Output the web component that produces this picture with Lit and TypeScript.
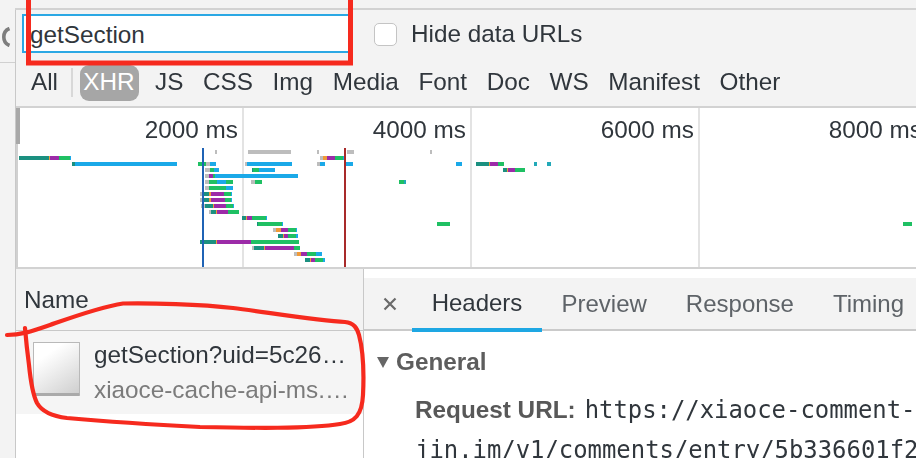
import { LitElement, html, css, svg } from "lit";
import { customElement } from "lit/decorators.js";

const C: Record<string, string> = {
  g: "#bdbdbd", t: "#1b9080", o: "#f09a38", p: "#9c2ba8", n: "#1fc063", b: "#1aa9e8", c: "#22a9b8",
};
type Seg = [string, number, number];
// Each row of the waterfall: centre y in the page and its coloured segments [colour, from x, to x].
const ROWS: [number, Seg[]][] = [
  [152, [["g", 215, 217], ["g", 248, 291], ["g", 317, 319], ["g", 347, 354], ["g", 430, 432]]],
  [158, [["t", 19, 49], ["o", 49, 50], ["p", 50, 59], ["n", 59, 70], ["b", 70, 71],
    ["g", 320, 323], ["o", 323, 327], ["p", 327, 335], ["n", 335, 343], ["b", 343, 345]]],
  [164, [["t", 72, 75], ["b", 75, 177], ["n", 198, 206], ["g", 206, 210], ["b", 210, 216], ["g", 245, 247], ["b", 247, 292],
    ["g", 317, 320], ["b", 320, 325], ["b", 346, 353], ["b", 456, 462], ["t", 476, 489], ["o", 489, 490], ["p", 490, 498], ["n", 498, 504],
    ["c", 534, 537], ["c", 547, 551]]],
  [170, [["g", 205, 210], ["n", 210, 214], ["b", 214, 219], ["t", 252, 253], ["n", 253, 259], ["b", 259, 275],
    ["t", 503, 507], ["o", 507, 508], ["p", 508, 515], ["n", 515, 525]]],
  [176, [["g", 205, 209], ["p", 209, 213], ["n", 213, 215], ["b", 215, 298]]],
  [182, [["g", 205, 209], ["n", 209, 217], ["b", 217, 226], ["n", 226, 233], ["g", 251, 255], ["n", 255, 262], ["n", 399, 404], ["c", 404, 406]]],
  [188, [["g", 205, 209], ["n", 209, 226], ["b", 226, 233]]],
  [194, [["g", 200, 203], ["t", 203, 209], ["o", 209, 211], ["p", 211, 224], ["n", 224, 231], ["b", 231, 232]]],
  [200, [["g", 200, 202], ["t", 202, 209], ["o", 209, 211], ["p", 211, 225], ["n", 225, 231], ["b", 231, 232]]],
  [206, [["g", 201, 205], ["t", 205, 213], ["o", 213, 214], ["p", 214, 226], ["n", 226, 233], ["b", 233, 234]]],
  [212, [["g", 209, 211], ["t", 211, 216], ["o", 216, 217], ["p", 217, 228], ["n", 228, 239]]],
  [218, [["t", 242, 246], ["o", 246, 247], ["p", 247, 252], ["n", 252, 266], ["b", 266, 267]]],
  [224, [["t", 257, 258], ["n", 258, 282], ["b", 282, 283], ["n", 437, 450], ["n", 903, 912]]],
  [230, [["g", 273, 276], ["o", 276, 281], ["p", 281, 288], ["n", 288, 296], ["b", 296, 297]]],
  [236, [["t", 278, 283], ["o", 283, 284], ["p", 284, 288], ["n", 288, 296], ["b", 296, 298]]],
  [242, [["t", 200, 216], ["o", 216, 217], ["p", 217, 251], ["n", 251, 299]]],
  [248, [["g", 252, 254], ["t", 254, 264], ["o", 264, 265], ["p", 265, 294], ["n", 294, 300]]],
  [254, [["g", 294, 297], ["o", 297, 301], ["p", 301, 307], ["n", 307, 316], ["b", 316, 322]]],
  [260, [["t", 305, 310], ["o", 310, 311], ["p", 311, 315], ["n", 315, 323], ["b", 323, 325]]],
];
const TYPES = ["JS", "CSS", "Img", "Media", "Font", "Doc", "WS", "Manifest", "Other"];
const TICKS = ["2000 ms", "4000 ms", "6000 ms", "8000 ms"];

@customElement("app-root")
export class AppRoot extends LitElement {
  static styles = css`
    :host {
      display: block; width: 916px; height: 458px; overflow: hidden; position: relative;
      font-family: "Liberation Sans", Arial, sans-serif; font-size: 24.3px; color: #30363c; background: #fff;
    }
    .shell { display: grid; grid-template-columns: 15px 1fr; height: 458px; filter: blur(0.35px); }
    .gutter { background: #f3f3f3; display: flex; flex-direction: column; }
    .gutter-top { height: 53px; padding: 9px 0 0 2px; box-sizing: content-box; border-bottom: 1px solid #d0d0d0; }
    .gutter-top svg { display: block; margin-top: 18px; }
    .main { display: flex; flex-direction: column; border-left: 1px solid #c8c8c8; min-width: 0; }
    .strip { height: 8px; flex: none; background: #f3f3f3; border-bottom: 2px solid #d2d2d2; margin-left: -1px; }
    .filter { height: 50px; flex: none; display: flex; align-items: center; background: #f3f3f3; }
    .input {
      width: 327px; height: 39px; margin: 0 0 0 6px; box-sizing: border-box; flex: none; background: #fff;
      border: 2px solid #2ba8e4; border-right: none; padding: 4px 0 0 6px; display: flex; align-items: center;
      position: relative; top: -1.5px; line-height: 1;
    }
    .check {
      width: 23px; height: 23px; box-sizing: border-box; margin-left: 25px; background: #fff; flex: none;
      border: 1px solid #c4c4c4; border-radius: 5px; position: relative; top: -0.5px;
    }
    .hide { margin-left: 14px; position: relative; top: -1px; }
    .types { height: 46px; flex: none; display: flex; align-items: center; background: #f3f3f3; padding: 0 0 2px 15px; box-sizing: border-box; }
    .sep { width: 1.5px; height: 29px; background: #d8d8d8; margin: 0 7px 0 13px; }
    .pill { background: #a6a6a6; color: #fff; border-radius: 9px; width: 59px; height: 36px; box-sizing: border-box; padding-bottom: 2px; position: relative; top: 1px; display: flex; align-items: center; justify-content: center; margin-right: 16.5px; flex: none; }
    .type-list { display: flex; gap: 19.6px; }
    .overview { height: 159px; flex: none; position: relative; background: #fff; border-top: 2px solid #d2d2d2; border-bottom: 2px solid #d2d2d2; box-sizing: content-box; }
    .ticks { display: grid; grid-template-columns: 228px 228px 228px 228px; height: 100%; }
    .tick { border-right: 2px solid #e3e3e3; box-sizing: border-box; text-align: right; padding: 8px 4px 0 0; white-space: nowrap; line-height: 28px; }
    .tick:last-child { border: none; padding-right: 6px; }
    .handle { position: absolute; left: 0; top: 0; width: 4px; height: 36px; background: #a8a8a8; }
    .rail { position: absolute; left: 0; top: 36px; bottom: 0; width: 2px; background: #d0d0d0; }
    .seg { position: absolute; height: 4.5px; }
    .vline { position: absolute; width: 2px; top: 40px; bottom: 0; }
    .bottom { flex: 1; min-height: 0; display: grid; grid-template-columns: 348px 1fr; }
    .list { border-right: 1px solid #c8c8c8; display: flex; flex-direction: column; min-width: 0; }
    .list-head { height: 62px; flex: none; background: #f3f3f3; border-bottom: 1px solid #c8c8c8; box-sizing: border-box; display: flex; align-items: center; padding: 0 0 0 8px; }
    .row { height: 83px; flex: none; background: #f5f5f5; display: flex; gap: 14px; padding: 10px 0 0 17px; box-sizing: border-box; }
    .file {
      width: 47px; height: 54px; margin-top: 1px; flex: none; box-sizing: border-box; border: 1.5px solid #b9b9b9; border-bottom: 3px solid #aaa;
      background: linear-gradient(145deg, #fff 25%, #cfcfcf 100%); border-radius: 1px;
    }
    .names { min-width: 0; display: flex; flex-direction: column; gap: 7px; line-height: 28px; white-space: nowrap; }
    .sub { color: #7b7b7b; }
    .detail { display: flex; flex-direction: column; min-width: 0; overflow: hidden; }
    .gap { height: 9px; flex: none; background: #fff; }
    .tabs { height: 53px; flex: none; display: flex; background: #f3f3f3; border-bottom: 2px solid #cacaca; box-sizing: border-box; align-items: stretch; font-size: 24px; }
    .close { width: 48px; flex: none; box-sizing: border-box; padding-left: 4px; display: flex; align-items: center; justify-content: center; }
    .tab { display: flex; align-items: center; padding: 0 19.5px; color: #5e6368; white-space: nowrap; flex: none; }
    .tab.on { color: #30363c; margin-bottom: -3px; border-bottom: 4px solid #1ea7e3; box-sizing: border-box; width: 130px; justify-content: center; padding: 0; }
    .body { padding: 16px 0 0 13px; flex: 1; min-height: 0; }
    .section { display: flex; align-items: center; font-weight: 700; color: #5d5d5d; height: 30px; gap: 7px; }
    .req { margin: 13px 0 0 38px; line-height: 40px; white-space: nowrap; color: #585858; font-weight: 700; }
    .mono { font-family: "DejaVu Sans Mono", "Liberation Mono", monospace; font-size: 23.9px; font-weight: 400; color: #30363c; margin-left: 9px; }
    .mono.wrap { margin-left: 0; display: block; }
    .ink { position: absolute; inset: 0; pointer-events: none; }
  `;

  render() {
    return html`
      <div class="shell">
        <div class="gutter">
          <div class="gutter-top">
            <svg width="9" height="20" viewBox="0 0 9 20"><path d="M7.5 1.5C3.5 3 1.8 6 1.8 10s1.7 7 5.7 8.5" fill="none" stroke="#7d7d7d" stroke-width="3.6"/></svg>
          </div>
        </div>
        <div class="main">
          <div class="strip"></div>
          <div class="filter">
            <div class="input">getSection</div>
            <div class="check"></div>
            <div class="hide">Hide data URLs</div>
          </div>
          <div class="types">
            <span>All</span><span class="sep"></span><span class="pill">XHR</span>
            <div class="type-list">${TYPES.map((t) => html`<span>${t}</span>`)}</div>
          </div>
          <div class="overview">
            <div class="ticks">${TICKS.map((t) => html`<div class="tick">${t}</div>`)}</div>
            <div class="handle"></div>
            <div class="rail"></div>
            ${ROWS.map(([y, segs]) => segs.map(([c, a, b]) => html`<div class="seg" style="left:${a - 16}px;top:${y - 2.25 - 108}px;width:${b - a}px;background:${C[c]}"></div>`))}
            <div class="vline" style="left:186px;background:#1f63b5"></div>
            <div class="vline" style="left:328px;background:#a82a2a"></div>
          </div>
          <div class="bottom">
            <div class="list">
              <div class="list-head"><span>Name</span></div>
              <div class="row">
                <div class="file"></div>
                <div class="names">
                  <span>getSection?uid=5c26…</span>
                  <span class="sub">xiaoce-cache-api-ms.…</span>
                </div>
              </div>
            </div>
            <div class="detail">
              <div class="gap"></div>
              <div class="tabs">
                <div class="close"><svg width="14" height="14" viewBox="0 0 14 14"><path d="M1.5 1.5l11 11M12.5 1.5l-11 11" stroke="#6a6a6a" stroke-width="2.2"/></svg></div>
                <div class="tab on">Headers</div>
                <div class="tab">Preview</div>
                <div class="tab">Response</div>
                <div class="tab">Timing</div>
              </div>
              <div class="body">
                <div class="section"><svg width="12" height="11" viewBox="0 0 12 11"><path d="M0 0h12L6 11z" fill="#666"/></svg>General</div>
                <div class="req">Request URL:<span class="mono">https://xiaoce-comment-</span><span class="mono wrap">jin.im/v1/comments/entry/5b336601f2</span></div>
              </div>
            </div>
          </div>
        </div>
      </div>
      <svg class="ink" width="916" height="458" viewBox="0 0 916 458" fill="none" stroke="#f62a1e">
        <rect x="28.5" y="-6" width="322" height="69" stroke-width="5"/>
        ${svg`<path stroke-width="4.2" stroke-linecap="round" stroke-linejoin="round" d="M7 335C20 335 30 332 50 325C70 318 100 307 123 303.5C150 303 200 304 233 308C265 312 320 321 345 322C354 323 357 328 359 335C363 350 364 375 363 395C362 415 355 422 340 424C310 429 250 428 200 427C160 425 100 421 67 418C50 416 41 410 37 403C33 395 30 375 29 365C27 350 26 340 25 328"/>`}
      </svg>
    `;
  }
}
